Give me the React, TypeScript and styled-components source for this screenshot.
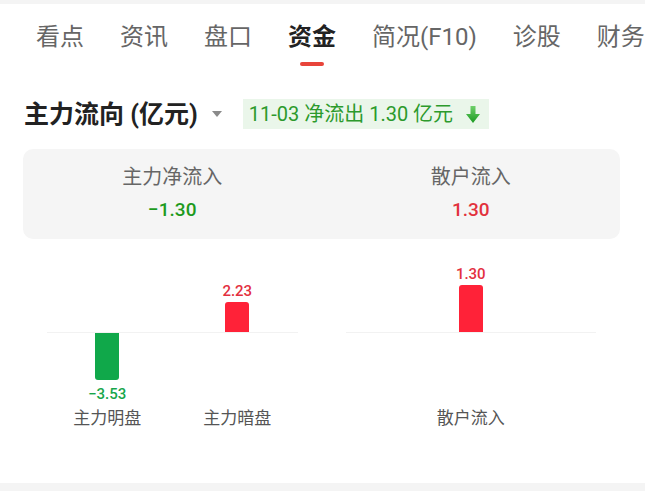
import React from 'react';
import styled, {createGlobalStyle} from "styled-components";

type FlowItemType = {
    name: string
    value: number
}

const TABS = ['看点', '资讯', '盘口', '资金', '简况(F10)', '诊股', '财务']
const ACTIVE_TAB = '资金'

const MAIN_ITEMS: FlowItemType[] = [
    {name: '主力明盘', value: -3.53},
    {name: '主力暗盘', value: 2.23},
]
const RETAIL_ITEMS: FlowItemType[] = [
    {name: '散户流入', value: 1.30},
]

const BAR_MAX = 47

const formatValue = (v: number) => (v < 0 ? '\u2212' : '') + Math.abs(v).toFixed(2)

const BarChart = (props: { items: FlowItemType[] }) => {
    const max = Math.max(...props.items.map(i => Math.abs(i.value)))

    return (
        <ChartHalf>
            <UpRow>
                {props.items.map(item => (
                    <UpCell key={item.name}>
                        {item.value > 0 && <>
                            <BarValue up>{formatValue(item.value)}</BarValue>
                            <Bar up style={{height: Math.abs(item.value) / max * BAR_MAX}}/>
                        </>}
                    </UpCell>
                ))}
            </UpRow>
            <Axis/>
            <DownRow>
                {props.items.map(item => (
                    <DownCell key={item.name}>
                        {item.value < 0 && <>
                            <Bar style={{height: Math.abs(item.value) / max * BAR_MAX}}/>
                            <BarValue>{formatValue(item.value)}</BarValue>
                        </>}
                    </DownCell>
                ))}
            </DownRow>
            <NameRow>
                {props.items.map(item => <NameCell key={item.name}>{item.name}</NameCell>)}
            </NameRow>
        </ChartHalf>
    )
}

const App = () => {
    return (
        <>
            <GlobalStyle/>
            <Strip thin/>
            <Tabs>
                {TABS.map(t => (
                    <Tab key={t}>
                        <TabText active={t === ACTIVE_TAB}>{t}</TabText>
                        <Indicator active={t === ACTIVE_TAB}/>
                    </Tab>
                ))}
            </Tabs>

            <Header>
                <Title>主力流向 (亿元)</Title>
                <Caret viewBox="0 0 10 6" width={10} height={6}>
                    <path d="M0 0 L10 0 L5 6 Z" fill="#8a8a8a"/>
                </Caret>
                <Badge>
                    11-03 净流出 1.30 亿元
                    <svg width="14" height="17" viewBox="0 0 14 17">
                        <defs>
                            <linearGradient id="arrowGreen" x1="0" y1="0" x2="0" y2="1">
                                <stop offset="0" stopColor="#6fd06a"/>
                                <stop offset="1" stopColor="#1b9a22"/>
                            </linearGradient>
                        </defs>
                        <path d="M4.5 0 H9.5 V8 H14 L7 17 L0 8 H4.5 Z" fill="url(#arrowGreen)"/>
                    </svg>
                </Badge>
            </Header>

            <Summary>
                <SummaryCol>
                    <SummaryLabel>主力净流入</SummaryLabel>
                    <SummaryValue color="#1d9a1d">{'\u2212'}1.30</SummaryValue>
                </SummaryCol>
                <SummaryCol>
                    <SummaryLabel>散户流入</SummaryLabel>
                    <SummaryValue color="#e2323d">1.30</SummaryValue>
                </SummaryCol>
            </Summary>

            <Charts>
                <BarChart items={MAIN_ITEMS}/>
                <BarChart items={RETAIL_ITEMS}/>
            </Charts>
            <Strip/>
        </>
    );
};

export default App

const GlobalStyle = createGlobalStyle`
  body {
    margin: 0;
    background: #fff;
    font-family: Roboto, "Noto Sans CJK SC", sans-serif;
  }
`

const Strip = styled.div<{ thin?: boolean }>`
  height: ${props => props.thin ? '4px' : '8px'};
  background-color: #f4f4f4;
`

const Tabs = styled.div`
  display: flex;
  gap: 36px;
  padding: 21px 0 0 36px;
  white-space: nowrap;
  overflow: hidden;
`

const Tab = styled.div`
  display: flex;
  flex-direction: column;
  align-items: center;
  flex-shrink: 0;
`

const TabText = styled.span<{ active?: boolean }>`
  font-size: 24px;
  line-height: 24px;
  color: ${props => props.active ? '#222' : '#666'};
  font-weight: ${props => props.active ? 'bold' : 'normal'};
`

const Indicator = styled.div<{ active?: boolean }>`
  margin-top: 13px;
  width: 24px;
  height: 4px;
  border-radius: 2px;
  background-color: #e8443a;
  visibility: ${props => props.active ? 'visible' : 'hidden'};
`

const Header = styled.div`
  display: flex;
  align-items: center;
  height: 30px;
  margin-top: 33px;
  padding-left: 24px;
`

const Title = styled.span`
  font-size: 25px;
  line-height: 25px;
  font-weight: bold;
  color: #222;
`

const Caret = styled.svg`
  margin-left: 14px;
`

const Badge = styled.div`
  display: flex;
  align-items: center;
  gap: 13px;
  height: 30px;
  margin-left: 21px;
  padding: 0 9px 0 6px;
  background-color: #eaf6ea;
  color: #2c9a2c;
  font-size: 20px;
  line-height: 20px;
`

const Summary = styled.div`
  display: grid;
  grid-template-columns: 1fr 1fr;
  margin: 20px 25px 0 23px;
  padding: 18px 0 20px;
  border-radius: 10px;
  background-color: #f5f5f5;
`

const SummaryCol = styled.div`
  display: flex;
  flex-direction: column;
  align-items: center;
`

const SummaryLabel = styled.span`
  font-size: 20px;
  line-height: 20px;
  color: #666;
`

const SummaryValue = styled.span`
  margin-top: 13px;
  font-size: 19px;
  line-height: 19px;
  font-weight: 500;
  color: ${props => props.color};
`

const Charts = styled.div`
  display: grid;
  grid-template-columns: repeat(2, minmax(0, 1fr));
  margin: 0 25px 0 23px;
  padding: 23px 0 56px;
`

const ChartHalf = styled.div`
  display: flex;
  flex-direction: column;
  padding: 0 24px;
  min-width: 0;
`

const UpRow = styled.div`
  display: flex;
  justify-content: center;
  height: 70px;
`

const DownRow = styled.div`
  display: flex;
  justify-content: center;
  height: 77px;
`

const NameRow = styled.div`
  display: flex;
  justify-content: center;
`

const UpCell = styled.div`
  flex: 0 0 130px;
  display: flex;
  flex-direction: column;
  align-items: center;
  justify-content: flex-end;
`

const DownCell = styled.div`
  flex: 0 0 130px;
  display: flex;
  flex-direction: column;
  align-items: center;
`

const NameCell = styled.div`
  flex: 0 0 130px;
  text-align: center;
  font-size: 17px;
  line-height: 17px;
  color: #555;
`

const Axis = styled.div`
  height: 1px;
  background-color: #f2f2f2;
`

const Bar = styled.div<{ up?: boolean }>`
  width: 24px;
  background-color: ${props => props.up ? '#ff2238' : '#10a84a'};
  border-radius: ${props => props.up ? '3px 3px 0 0' : '0 0 3px 3px'};
`

const BarValue = styled.span<{ up?: boolean }>`
  font-size: 15px;
  line-height: 15px;
  font-weight: 500;
  color: ${props => props.up ? '#e3303f' : '#17a64b'};
  margin: ${props => props.up ? '0 0 3px' : '7px 0 0'};
`
